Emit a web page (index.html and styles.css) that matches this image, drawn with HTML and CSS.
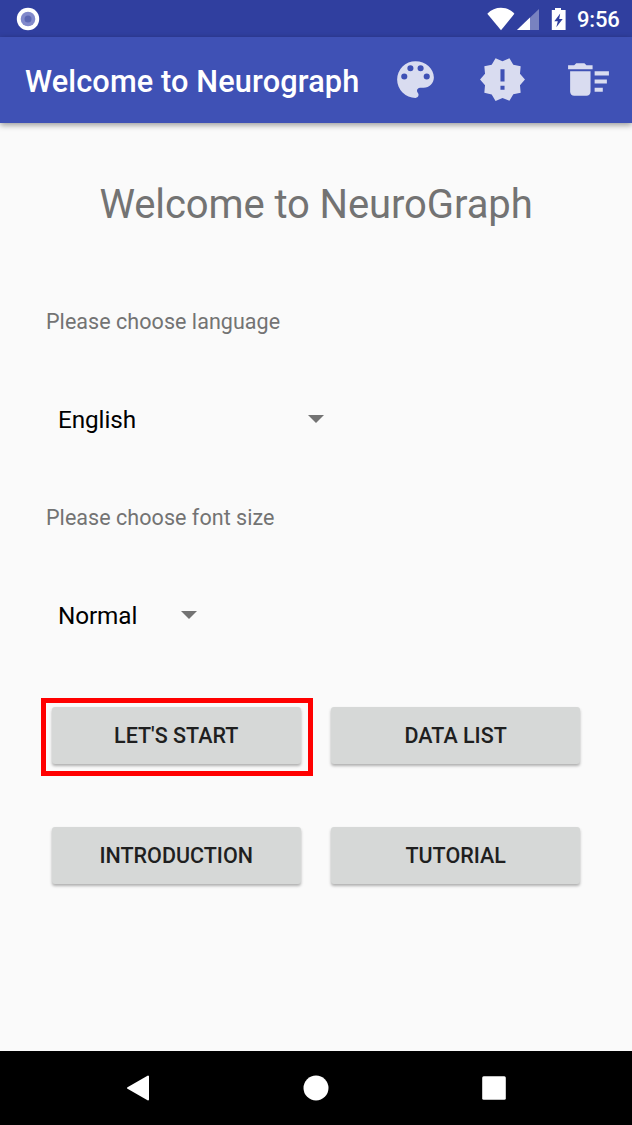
FILE: index.html
```html
<!DOCTYPE html>
<html lang="en">
<head>
<meta charset="utf-8">
<title>Welcome to Neurograph</title>
<link rel="stylesheet" href="styles.css">
</head>
<body>
<div class="screen">
  <div class="status">
    <svg class="status-dot" viewBox="0 0 24 24"><circle cx="12" cy="12" r="11.2" fill="#fff"/><circle cx="12" cy="12" r="7.3" fill="#8189cb"/><circle cx="12" cy="12" r="3.5" fill="#5c67b3"/></svg>
    <svg class="status-icons" viewBox="0 0 84 28">
      <path d="M0.3 7.7C8-.2 20-.2 27.4 7.7L14 24.3z" fill="#fff"/>
      <path d="M52 3v21H30z" fill="#fff" opacity=".35"/>
      <path d="M43 11.6V24H30z" fill="#fff"/>
      <path fill-rule="evenodd" d="M68 2h6v2h4.6v20H64.800V4H68zM73.200 7.500L67.300 15.200h3.500L69.300 21.200l6.400-8.200h-3.500z" fill="#fff"/>
    </svg>
    <span class="clock">9:56</span>
  </div>
  <header class="appbar">
    <h1 class="appbar-title">Welcome to Neurograph</h1>
    <div class="actions">
      <svg class="action" viewBox="0 0 24 24"><path d="M12 3a9 9 0 0 0 0 18c.83 0 1.500-.67 1.500-1.500 0-.39-.15-.74-.39-1.010-.23-.26-.38-.61-.38-.99 0-.83.67-1.500 1.500-1.500H16c2.760 0 5-2.240 5-5 0-4.420-4.030-8-9-8zm-5.500 9a1.500 1.500 0 1 1 0-3 1.500 1.500 0 0 1 0 3zm3-4a1.500 1.500 0 1 1 0-3 1.500 1.500 0 0 1 0 3zm5 0a1.500 1.500 0 1 1 0-3 1.500 1.500 0 0 1 0 3zm3 4a1.500 1.500 0 1 1 0-3 1.500 1.500 0 0 1 0 3z"/></svg>
      <svg class="action" viewBox="0 0 24 24"><path d="M23 12l-2.440-2.780.34-3.680-3.610-.82-1.890-3.180L12 3 8.600 1.540 6.710 4.720l-3.610.81.34 3.680L1 12l2.440 2.780-.34 3.690 3.610.82 1.890 3.180L12 21l3.400 1.460 1.890-3.180 3.610-.82-.34-3.680L23 12zm-10 5h-2v-2h2v2zm0-4h-2V7h2v6z"/></svg>
      <svg class="action" viewBox="0 0 24 24"><path d="M15 16h4v2h-4zm0-8h7v2h-7zm0 4h6v2h-6zM3 18c0 1.100.9 2 2 2h6c1.100 0 2-.9 2-2V8H3v10zM14 5h-3l-1-1H6L5 5H2v2h12z"/></svg>
    </div>
  </header>
  <main class="content">
    <h2 class="heading">Welcome to NeuroGraph</h2>
    <p class="label">Please choose language</p>
    <div class="spinner spinner-language"><span class="value">English</span><svg class="caret" viewBox="0 0 16 8"><path d="M0 0h16L8 8z"/></svg></div>
    <p class="label">Please choose font size</p>
    <div class="spinner spinner-size"><span class="value">Normal</span><svg class="caret" viewBox="0 0 16 8"><path d="M0 0h16L8 8z"/></svg></div>
    <div class="buttons">
      <button class="btn highlighted">LET'S START</button>
      <button class="btn">DATA LIST</button>
      <button class="btn">INTRODUCTION</button>
      <button class="btn">TUTORIAL</button>
    </div>
  </main>
  <nav class="navbar">
    <svg class="nav-icon" viewBox="0 0 26 26"><path d="M3 13L23 1.500v23z" fill="#fff" stroke="#fff" stroke-width="2" stroke-linejoin="round"/></svg>
    <svg class="nav-icon" viewBox="0 0 26 26"><circle cx="13" cy="13" r="12.500" fill="#fff"/></svg>
    <svg class="nav-icon" viewBox="0 0 26 26"><rect x="1.200" y="1.200" width="23.600" height="23.600" rx="1.500" fill="#fff"/></svg>
  </nav>
</div>
</body>
</html>
```
FILE: styles.css
```css
*, *::after { box-sizing: border-box; }
body { margin: 0; font-family: Roboto, sans-serif; background: #fafafa; }
h1, h2, p { margin: 0; font-weight: 400; }
.screen { display: flex; flex-direction: column; width: 632px; height: 1125px; }
.status { display: flex; align-items: center; height: 37px; padding: 0 12px 0 16px; background: #303f9f; }
.status-dot { width: 24px; height: 24px; }
.status-icons { width: 84px; height: 28px; margin-left: auto; margin-top: 2px; }
.clock { width: 43px; margin-left: 6px; margin-top: 3px; color: #fff; font-size: 22px; line-height: 26px; font-weight: 500; letter-spacing: -.2px; white-space: nowrap; }
.appbar { display: flex; align-items: center; height: 86px; padding: 0 19px 0 25px; background: #3f51b5; box-shadow: 0 2px 6px rgba(0, 0, 0, .4); }
.appbar-title { color: #fff; font-size: 30.7px; line-height: 36px; font-weight: 500; letter-spacing: .13px; white-space: nowrap; margin-top: 3px; }
.actions { display: flex; gap: 37.500px; margin-left: auto; margin-bottom: 1px; }
.action { width: 49px; height: 49px; fill: #d9dcf0; }
.content { flex: 1; padding: 58px 46px 0; }
.heading { color: #737373; font-size: 40px; line-height: 48px; letter-spacing: -.1px; text-align: center; white-space: nowrap; }
.label { color: #737373; font-size: 21.500px; line-height: 26px; letter-spacing: .05px; white-space: nowrap; margin-top: 80px; }
.spinner { display: flex; align-items: center; justify-content: space-between; height: 36px; margin-top: 66px; padding-left: 12px; }
.spinner-language { width: 278px; }
.spinner-size { width: 151px; }
.spinner + .label { margin-top: 68px; }
.value { color: #000; font-size: 24.3px; line-height: 30px; letter-spacing: -.1px; padding-top: 1px; }
.caret { width: 16px; height: 8px; fill: #737373; }
.buttons { display: grid; grid-template-columns: 249px 249px; gap: 63px 30.500px; margin-top: 73.500px; padding-left: 5.700px; }
.btn { position: relative; height: 57px; border: 0; border-radius: 3px; padding: 1px 0 0; background: #d6d8d7; box-shadow: 0 2px 3px rgba(0, 0, 0, .3); color: #1f1f1f; font-family: Roboto, sans-serif; font-size: 21.500px; line-height: 26px; font-weight: 500; }
.highlighted::after { content: ""; position: absolute; top: -8.500px; left: -10.700px; width: 272px; height: 78px; border: 5px solid #f00; }
.navbar { display: flex; align-items: center; justify-content: space-between; height: 74px; padding: 0 125px; background: #000; }
.nav-icon { width: 26px; height: 26px; }
```
